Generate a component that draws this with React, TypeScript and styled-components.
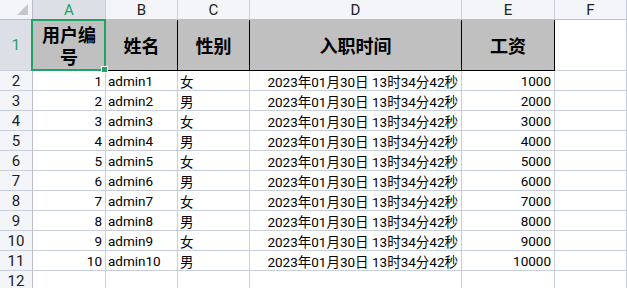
import React from 'react';
import styled, { createGlobalStyle } from 'styled-components';

const GlobalStyle = createGlobalStyle`
    html, body {
        margin: 0;
        padding: 0;
        background: #ffffff;
        overflow: hidden;
    }
`;

const GRID = '#c8cedd';
const HEAD_LINE = '#b9beca';
const GREEN = '#21a366';

const columns = ['A', 'B', 'C', 'D', 'E', 'F'];
const headers = ['用户编号', '姓名', '性别', '入职时间', '工资'];

const rows = Array.from({ length: 10 }, (_, i) => ({
    id: i + 1,
    name: `admin${i + 1}`,
    sex: i % 2 === 0 ? '女' : '男',
    date: '2023年01月30日 13时34分42秒',
    salary: (i + 1) * 1000,
}));

const Sheet = styled.div`
    position: relative;
    display: grid;
    grid-template-columns: 33px 73px 72px 72px 212px 93px 1fr;
    grid-template-rows: 20px 51px repeat(11, 20px);
    width: 627px;
    height: 288px;
    overflow: hidden;
    font-family: Roboto, "Noto Sans CJK SC", sans-serif;
    color: #000;
`;

const Corner = styled.div`
    position: relative;
    box-sizing: border-box;
    background: #f4f5f8;
    border-right: 1px solid ${HEAD_LINE};
    border-bottom: 1px solid ${HEAD_LINE};

    &::after {
        content: '';
        position: absolute;
        right: 4px;
        bottom: 4px;
        width: 0;
        height: 0;
        border-left: 11px solid transparent;
        border-bottom: 11px solid #c3c6cc;
    }
`;

const ColHead = styled.div<{ $active?: boolean }>`
    box-sizing: border-box;
    display: flex;
    align-items: center;
    justify-content: center;
    font-size: 15px;
    background: ${p => (p.$active ? '#dcdfe5' : '#f4f5f8')};
    color: ${p => (p.$active ? GREEN : '#222')};
    border-right: 1px solid ${GRID};
    border-bottom: 1px solid ${HEAD_LINE};
`;

const RowHead = styled.div<{ $active?: boolean }>`
    box-sizing: border-box;
    display: flex;
    align-items: center;
    justify-content: center;
    font-size: 15px;
    background: ${p => (p.$active ? '#dcdfe5' : '#f4f5f8')};
    color: ${p => (p.$active ? GREEN : '#222')};
    border-right: 1px solid ${HEAD_LINE};
    border-bottom: 1px solid ${GRID};
`;

const Cell = styled.div<{ $align?: 'left' | 'right' }>`
    box-sizing: border-box;
    display: flex;
    align-items: center;
    justify-content: ${p => (p.$align === 'right' ? 'flex-end' : 'flex-start')};
    padding: 1px 3px 0 2px;
    font-size: 13.5px;
    white-space: nowrap;
    border-right: 1px solid ${GRID};
    border-bottom: 1px solid ${GRID};
`;

const HeadCell = styled.div<{ $last?: boolean }>`
    box-sizing: border-box;
    display: flex;
    align-items: center;
    justify-content: center;
    text-align: center;
    padding: 0 8px;
    background: #c0c0c0;
    font-family: "Noto Sans CJK SC", sans-serif;
    font-weight: 700;
    font-size: 18px;
    line-height: 22px;
    border-right: 1px solid #000;
    border-bottom: 1px solid #000;
`;

const EmptyHead = styled.div`
    box-sizing: border-box;
    border-right: 1px solid ${GRID};
    border-bottom: 1px solid ${GRID};
`;

const Selection = styled.div`
    position: absolute;
    left: 31px;
    top: 19px;
    width: 75px;
    height: 52px;
    box-sizing: border-box;
    border: 2px solid ${GREEN};
    pointer-events: none;

    &::after {
        content: '';
        position: absolute;
        right: -4px;
        bottom: -4px;
        width: 5px;
        height: 5px;
        background: ${GREEN};
        border: 1px solid #fff;
    }
`;

export default function App() {
    return (
        <>
            <GlobalStyle />
            <Sheet>
                <Corner />
                {columns.map(c => (
                    <ColHead key={c} $active={c === 'A'}>{c}</ColHead>
                ))}

                <RowHead $active>1</RowHead>
                {headers.map(h => (
                    <HeadCell key={h}>{h}</HeadCell>
                ))}
                <EmptyHead />

                {rows.map((r, i) => (
                    <React.Fragment key={r.id}>
                        <RowHead>{i + 2}</RowHead>
                        <Cell $align="right">{r.id}</Cell>
                        <Cell>{r.name}</Cell>
                        <Cell>{r.sex}</Cell>
                        <Cell $align="right">{r.date}</Cell>
                        <Cell $align="right">{r.salary}</Cell>
                        <Cell />
                    </React.Fragment>
                ))}

                <RowHead>12</RowHead>
                {columns.map(c => (
                    <Cell key={c} />
                ))}

                <Selection />
            </Sheet>
        </>
    );
}
